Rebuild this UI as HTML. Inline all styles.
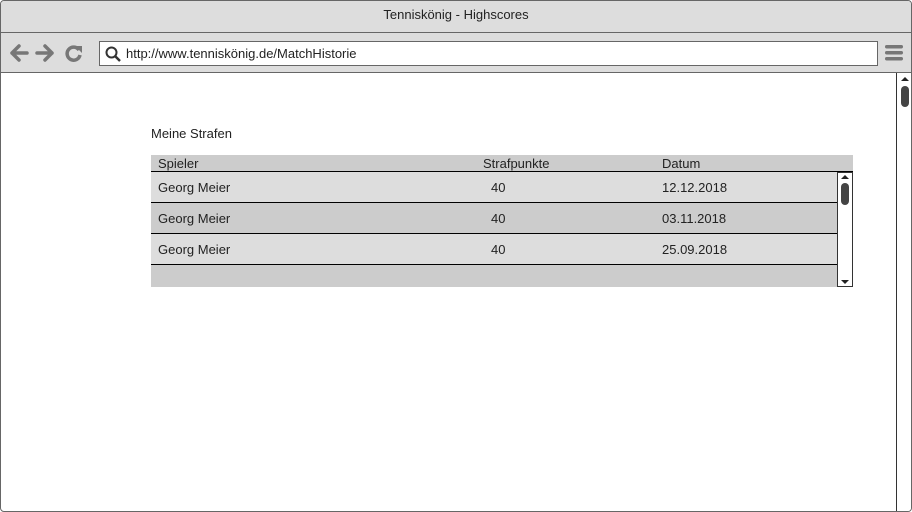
<!DOCTYPE html>
<html><head><style>
*{margin:0;padding:0;box-sizing:border-box}
body{width:912px;height:512px;overflow:hidden;background:#fff;font-family:"Liberation Sans",sans-serif;font-size:13px;color:#222;position:relative}
.frame{position:absolute;left:0;top:0;width:912px;height:512px;border:1px solid #666;border-radius:4px;overflow:hidden}
.title{position:absolute;left:0;top:0;width:910px;height:32px;background:#ddd;border-bottom:1px solid #666;text-align:center;line-height:28px;font-size:13px}
.tool{position:absolute;left:0;top:32px;width:910px;height:40px;background:#ddd;border-bottom:1px solid #666}
.url{position:absolute;left:98px;top:8px;width:779px;height:25px;background:#fff;border:1px solid #666;line-height:23px;padding-left:26px;font-size:13px}
.a{position:absolute;font-size:13px}
.row{position:absolute;left:151px;width:702px;border-bottom:1px solid #000}
.cell{position:absolute;top:0}
</style></head><body>
<div class="frame">
<div class="title">Tenniskönig - Highscores</div>
<div class="tool">
<svg style="position:absolute;left:8px;top:10px" width="76" height="20" viewBox="0 0 76 20">
<path d="M3 10 L10 3 M3 10 L10 17 M3 10 H18" stroke="#777" stroke-width="3.5" fill="none" stroke-linecap="round"/>
<path d="M43 10 L36 3 M43 10 L36 17 M43 10 H28" stroke="#777" stroke-width="3.5" fill="none" stroke-linecap="round"/>
<path d="M70 7 A6.5 6.5 0 1 0 71 12" stroke="#777" stroke-width="3.5" fill="none"/>
<path d="M66 3 L73 3 L73 10 Z" fill="#777"/>
</svg>
<div class="url"><svg style="position:absolute;left:5px;top:4px" width="16" height="16"><circle cx="6.5" cy="6.5" r="5" stroke="#333" stroke-width="2" fill="none"/><path d="M10 10 L15 15" stroke="#333" stroke-width="2.5"/></svg>http://www.tenniskönig.de/MatchHistorie</div>
<svg style="position:absolute;left:883px;top:11px" width="20" height="18"><rect x="1" y="1" width="18" height="3.5" rx="1.7" fill="#777"/><rect x="1" y="7" width="18" height="3.5" rx="1.7" fill="#777"/><rect x="1" y="13" width="18" height="3.5" rx="1.7" fill="#777"/></svg>
</div>
<div style="position:absolute;left:895px;top:72px;width:16px;height:440px;border-left:1px solid #333;background:#fff"></div>
<svg style="position:absolute;left:898px;top:74px" width="12" height="34"><path d="M2 6 L6 2 L10 6Z" fill="#222"/><rect x="2" y="11" width="8" height="21" rx="4" fill="#444"/></svg>
</div>
<div class="a" style="left:151px;top:126px">Meine Strafen</div>
<div class="row" style="top:155px;height:17px;background:#ccc"><span class="cell" style="left:7px;top:1px">Spieler</span><span class="cell" style="left:332px;top:1px">Strafpunkte</span><span class="cell" style="left:511px;top:1px">Datum</span></div>
<div class="row" style="top:172px;height:31px;background:#ddd"><span class="cell" style="left:7px;top:8px">Georg Meier</span><span class="cell" style="left:340px;top:8px">40</span><span class="cell" style="left:511px;top:8px">12.12.2018</span></div>
<div class="row" style="top:203px;height:31px;background:#ccc"><span class="cell" style="left:7px;top:8px">Georg Meier</span><span class="cell" style="left:340px;top:8px">40</span><span class="cell" style="left:511px;top:8px">03.11.2018</span></div>
<div class="row" style="top:234px;height:31px;background:#ddd"><span class="cell" style="left:7px;top:8px">Georg Meier</span><span class="cell" style="left:340px;top:8px">40</span><span class="cell" style="left:511px;top:8px">25.09.2018</span></div>
<div class="row" style="top:265px;height:22px;background:#ccc;border-bottom:none"></div>
<div style="position:absolute;left:837px;top:172px;width:16px;height:115px;background:#fff;border:1px solid #333"></div>
<svg style="position:absolute;left:838px;top:173px" width="14" height="113"><path d="M3 6 L7 2 L11 6Z" fill="#222"/><rect x="3" y="10" width="8" height="22" rx="4" fill="#444"/><path d="M3 107 L7 111 L11 107Z" fill="#222"/></svg>
</body></html>
